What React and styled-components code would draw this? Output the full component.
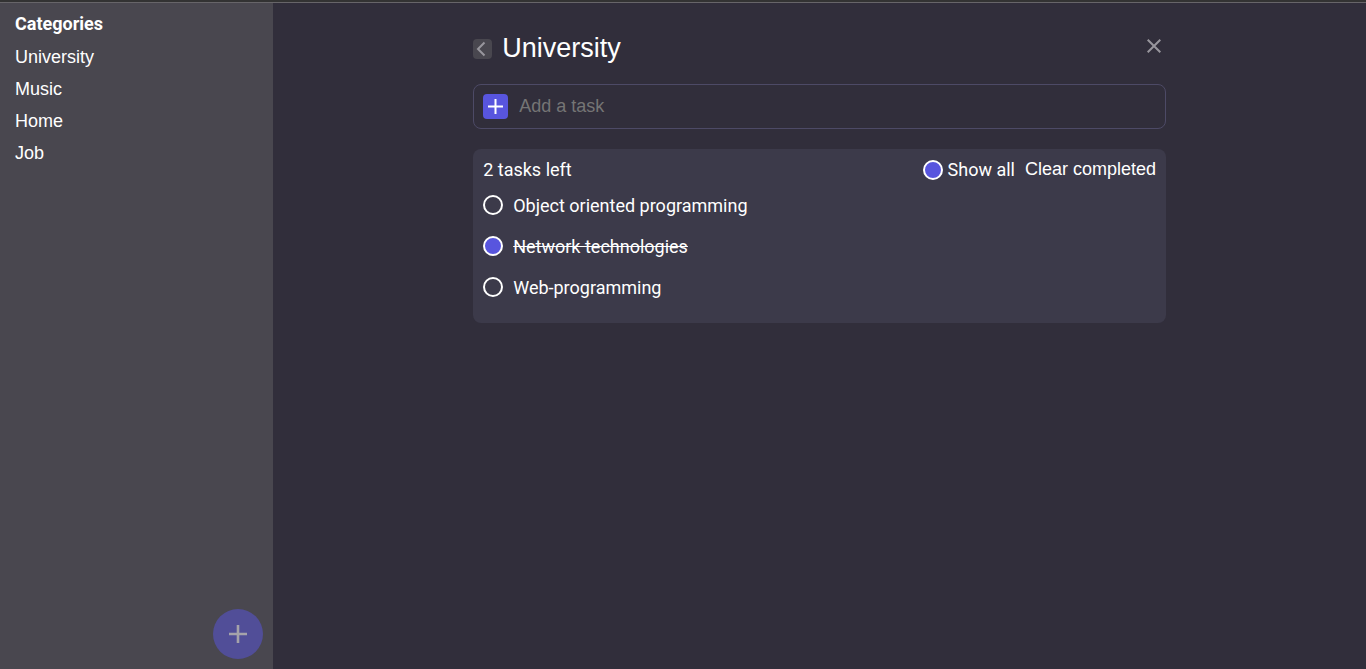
import React, { useState } from "react";
import styled, { createGlobalStyle } from "styled-components";

const GlobalStyle = createGlobalStyle`
  *, *::before, *::after { box-sizing: border-box; }
  body {
    margin: 0;
    background: #312e3b;
    color: #fff;
    font-family: Roboto, sans-serif;
    font-size: 18px;
  }
  ul, h1, h2, p { margin: 0; padding: 0; }
  ul { list-style: none; }
  button, input { font-family: "Liberation Sans", Arial, sans-serif; font-size: 18px; color: inherit; }
  button { padding: 0; border: 0; background: none; cursor: pointer; }
`;

const Page = styled.div`
  display: flex;
  min-height: 100vh;
  border-top: 2px solid #333333;
`;

const Sidebar = styled.aside`
  flex: 0 0 20%;
  display: flex;
  flex-direction: column;
  padding: 10px;
  border-top: 1px solid #676569;
  background: #49474f;
`;

const SidebarTitle = styled.h2`
  padding: 0 5px;
  font-size: 18px;
  line-height: 22px;
  margin-bottom: 6px;
`;

const CategoryButton = styled.button`
  display: block;
  width: 100%;
  padding: 0 5px;
  line-height: 32px;
  text-align: left;
`;

const AddCategoryButton = styled.button`
  display: grid;
  place-items: center;
  width: 50px;
  height: 50px;
  margin: auto 0 0 auto;
  border-radius: 50%;
  background: #514e98;
  color: #a5a3aa;
`;

const Main = styled.main`
  flex: 1;
  min-width: 0;
  padding: 28px 200px;
  border-top: 1px solid #676569;
`;

const Header = styled.header`
  display: flex;
  align-items: center;
  gap: 10px;
  height: 36px;
  margin-bottom: 17px;
`;

const BackButton = styled.button`
  display: grid;
  place-items: center;
  width: 19px;
  height: 20px;
  border-radius: 4px;
  background: #49474f;
  color: #98969d;
`;

const Title = styled.h1`
  flex: 1;
  padding-bottom: 2px;
  font-family: "Liberation Sans", Arial, sans-serif;
  font-size: 27px;
  font-weight: 400;
  line-height: 32px;
`;

const CloseButton = styled.button`
  display: grid;
  place-items: center;
  width: 24px;
  height: 32px;
  padding-bottom: 6px;
  color: #98969d;
`;

const AddTaskForm = styled.form`
  display: flex;
  align-items: center;
  gap: 10px;
  height: 45px;
  margin-bottom: 20px;
  padding: 0 9px;
  border: 1px solid #4d4a66;
  border-radius: 8px;
`;

const AddTaskButton = styled.button`
  display: grid;
  place-items: center;
  width: 25px;
  height: 25px;
  border-radius: 4px;
  background: #5855de;
`;

const TaskInput = styled.input`
  flex: 1;
  min-width: 0;
  padding: 0 1px;
  border: 0;
  outline: 0;
  background: none;
  &::placeholder { color: #757575; opacity: 1; }
`;

const Panel = styled.section`
  padding: 10px 10px 16px;
  border-radius: 8px;
  background: #3c3a4a;
`;

const PanelHeader = styled.div`
  display: flex;
  align-items: center;
  gap: 10px;
  height: 21px;
  margin-bottom: 4px;
`;

const TasksLeft = styled.p`
  margin-right: auto;
  line-height: 20px;
`;

const ClearButton = styled.button`
  padding-bottom: 2px;
  line-height: 20px;
`;

const CheckLabel = styled.label`
  display: flex;
  align-items: center;
  gap: ${(p) => p.$gap}px;
  line-height: 20px;
  cursor: pointer;
`;

const Check = styled.input.attrs({ type: "checkbox" })`
  appearance: none;
  flex: none;
  width: 20px;
  height: 20px;
  margin: 0;
  border: 2px solid #fff;
  border-radius: 50%;
  cursor: pointer;
  &:checked { background: #5855de; }
`;

const TaskItem = styled.li`
  height: 41px;
  padding-top: 10px;
`;

const TaskText = styled.span`
  padding-top: 2px;
  text-decoration: ${(p) => (p.$done ? "line-through" : "none")};
`;

function Plus({ size, stroke }) {
  return (
    <svg width={size} height={size} viewBox="0 0 18 18" fill="none" stroke="currentColor" strokeWidth={stroke} aria-hidden="true">
      <path d="M9 0v18M0 9h18" />
    </svg>
  );
}

const categories = ["University", "Music", "Home", "Job"];

const initialTasks = [
  { id: 1, text: "Object oriented programming", done: false },
  { id: 2, text: "Network technologies", done: true },
  { id: 3, text: "Web-programming", done: false },
];

export default function App() {
  const [category, setCategory] = useState("University");
  const [tasks, setTasks] = useState(initialTasks);
  const [showAll, setShowAll] = useState(true);
  const [draft, setDraft] = useState("");

  const left = tasks.filter((t) => !t.done).length;
  const visible = showAll ? tasks : tasks.filter((t) => !t.done);

  const toggle = (id) =>
    setTasks(tasks.map((t) => (t.id === id ? { ...t, done: !t.done } : t)));

  const addTask = (e) => {
    e.preventDefault();
    if (!draft.trim()) return;
    setTasks([...tasks, { id: Date.now(), text: draft.trim(), done: false }]);
    setDraft("");
  };

  return (
    <>
      <GlobalStyle />
      <Page>
        <Sidebar>
          <SidebarTitle>Categories</SidebarTitle>
          <ul>
            {categories.map((name) => (
              <li key={name}>
                <CategoryButton type="button" onClick={() => setCategory(name)}>{name}</CategoryButton>
              </li>
            ))}
          </ul>
          <AddCategoryButton type="button" aria-label="Add category">
            <Plus size={18} stroke={2.6} />
          </AddCategoryButton>
        </Sidebar>
        <Main>
          <Header>
            <BackButton type="button" aria-label="Back">
              <svg width="19" height="20" viewBox="0 0 19 20" fill="none" stroke="currentColor" strokeWidth="2" aria-hidden="true">
                <path d="M11.500 3.500 5 10l6.500 6.500" />
              </svg>
            </BackButton>
            <Title>{category}</Title>
            <CloseButton type="button" aria-label="Close">
              <svg width="14" height="14" viewBox="0 0 14 14" fill="none" stroke="currentColor" strokeWidth="2" aria-hidden="true">
                <path d="M.7.7l12.600 12.600M13.300.7L.7 13.300" />
              </svg>
            </CloseButton>
          </Header>
          <AddTaskForm onSubmit={addTask}>
            <AddTaskButton type="submit" aria-label="Add task">
              <Plus size={15} stroke={2.4} />
            </AddTaskButton>
            <TaskInput
              aria-label="New task"
              placeholder="Add a task"
              value={draft}
              onChange={(e) => setDraft(e.target.value)}
            />
          </AddTaskForm>
          <Panel>
            <PanelHeader>
              <TasksLeft>{left} tasks left</TasksLeft>
              <CheckLabel $gap={5}>
                <Check checked={showAll} onChange={() => setShowAll(!showAll)} />
                Show all
              </CheckLabel>
              <ClearButton type="button" onClick={() => setTasks(tasks.filter((t) => !t.done))}>
                Clear completed
              </ClearButton>
            </PanelHeader>
            <ul>
              {visible.map((t) => (
                <TaskItem key={t.id}>
                  <CheckLabel $gap={10}>
                    <Check checked={t.done} onChange={() => toggle(t.id)} />
                    <TaskText $done={t.done}>{t.text}</TaskText>
                  </CheckLabel>
                </TaskItem>
              ))}
            </ul>
          </Panel>
        </Main>
      </Page>
    </>
  );
}
